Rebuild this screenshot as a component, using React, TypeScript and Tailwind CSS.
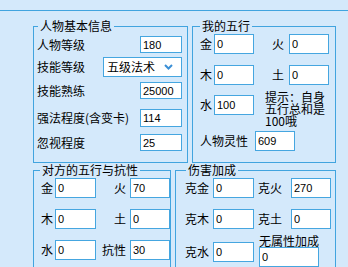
const cjk = "font-['Noto_Sans_CJK_SC',sans-serif]";

function Field({ v, w = "w-[40px]", h = "h-[20px]" }: { v: string; w?: string; h?: string }) {
  return (
    <input
      readOnly
      value={v}
      className={`${w} ${h} shrink-0 border border-[#45a6e0] bg-white pl-[2px] text-[11px] text-black outline-none font-['Liberation_Sans',sans-serif]`}
    />
  );
}

function Legend({ text, ml }: { text: string; ml: string }) {
  return <legend className={`${ml} px-[2px] text-[12px] leading-[14px]`}>{text}</legend>;
}

export default function App() {
  return (
    <div className={`h-[267px] w-[348px] overflow-hidden bg-[#d4e9fb] pt-[10px] text-black ${cjk}`}>
      <div className="border-t border-[#41a4df] pl-[33px] pr-[12px] pt-[8px]">
        {/* top row */}
        <div className="flex gap-[4px]">
          <fieldset className="h-[144px] w-[155px] shrink-0 border border-[#41a4df]">
            <Legend text="人物基本信息" ml="ml-[4px]" />
            <div className="pl-[3px] pr-[5px] text-[12px]">
              <div className="mt-[3px] flex h-[17px] items-center justify-between">
                <span>人物等级</span>
                <Field v="180" w="w-[42px]" h="h-[17px]" />
              </div>
              <div className="mt-[4px] flex h-[20px] items-center justify-between">
                <span>技能等级</span>
                <div className="flex h-[20px] w-[79px] items-center justify-between border border-[#45a6e0] bg-white pl-[3px] pr-[8px]">
                  <span>五级法术</span>
                  <svg width="9" height="6" viewBox="0 0 9 6">
                    <path d="M1 1l3.5 3.5L8 1" stroke="#3b8fd6" strokeWidth="2" fill="none" />
                  </svg>
                </div>
              </div>
              <div className="mt-[5px] flex h-[17px] items-center justify-between">
                <span>技能熟练</span>
                <Field v="25000" w="w-[42px]" h="h-[17px]" />
              </div>
              <div className="mt-[10px] flex h-[18px] items-center justify-between">
                <span>强法程度(含变卡)</span>
                <Field v="114" w="w-[42px]" h="h-[18px]" />
              </div>
              <div className="mt-[7px] flex h-[17px] items-center justify-between">
                <span>忽视程度</span>
                <Field v="25" w="w-[42px]" h="h-[17px]" />
              </div>
            </div>
          </fieldset>

          <fieldset className="h-[144px] flex-1 border border-[#41a4df]">
            <Legend text="我的五行" ml="ml-[7px]" />
            <div className="pl-[7px] text-[12px]">
              <div className="mt-[1px] flex items-center">
                <span className="w-[14px]">金</span>
                <Field v="0" />
                <span className="ml-[18px] w-[17px]">火</span>
                <Field v="0" />
              </div>
              <div className="mt-[11px] flex items-center">
                <span className="w-[14px]">木</span>
                <Field v="0" />
                <span className="ml-[18px] w-[17px]">土</span>
                <Field v="0" />
              </div>
              <div className="mt-[6px] flex items-start">
                <div className="mt-[4px] flex items-center">
                  <span className="w-[14px]">水</span>
                  <Field v="100" />
                </div>
                <p className="ml-[11px] w-[62px] text-[12px] leading-[12px]">提示：自身五行总和是100哦</p>
              </div>
              <div className="mt-[4px] flex items-center">
                <span className="w-[55px]">人物灵性</span>
                <Field v="609" />
              </div>
            </div>
          </fieldset>
        </div>

        {/* bottom row */}
        <div className="flex gap-[4px]">
          <fieldset className="h-[120px] w-[138px] shrink-0 border border-[#41a4df]">
            <Legend text="对方的五行与抗性" ml="ml-[6px]" />
            <div className="pl-[7px] text-[12px]">
              {[
                ["金", "0", "火", "70"],
                ["木", "0", "土", "0"],
                ["水", "0", "抗性", "30"],
              ].map((r, i) => (
                <div key={i} className={`${i === 0 ? "mt-[1px]" : "mt-[11px]"} flex items-center`}>
                  <span className="w-[14px]">{r[0]}</span>
                  <Field v={r[1]} w="w-[41px]" />
                  <span className="w-[34px] pr-[4px] text-right">{r[2]}</span>
                  <Field v={r[3]} />
                </div>
              ))}
            </div>
          </fieldset>

          <fieldset className="h-[120px] flex-1 border border-[#41a4df]">
            <Legend text="伤害加成" ml="ml-[10px]" />
            <div className="pl-[9px] text-[12px]">
              <div className="mt-[1px] flex items-center">
                <span className="w-[28px]">克金</span>
                <Field v="0" w="w-[41px]" />
                <span className="ml-[4px] w-[33px]">克火</span>
                <Field v="270" />
              </div>
              <div className="mt-[11px] flex items-center">
                <span className="w-[28px]">克木</span>
                <Field v="0" w="w-[41px]" />
                <span className="ml-[4px] w-[33px]">克土</span>
                <Field v="0" />
              </div>
              <div className="mt-[5px] flex items-start">
                <div className="mt-[8px] flex items-center">
                  <span className="w-[28px]">克水</span>
                  <Field v="0" w="w-[41px]" />
                </div>
                <div className="ml-[5px] flex flex-col">
                  <span className="leading-[13px]">无属性加成</span>
                  <Field v="0" w="w-[60px]" />
                </div>
              </div>
            </div>
          </fieldset>
        </div>
      </div>
    </div>
  );
}
